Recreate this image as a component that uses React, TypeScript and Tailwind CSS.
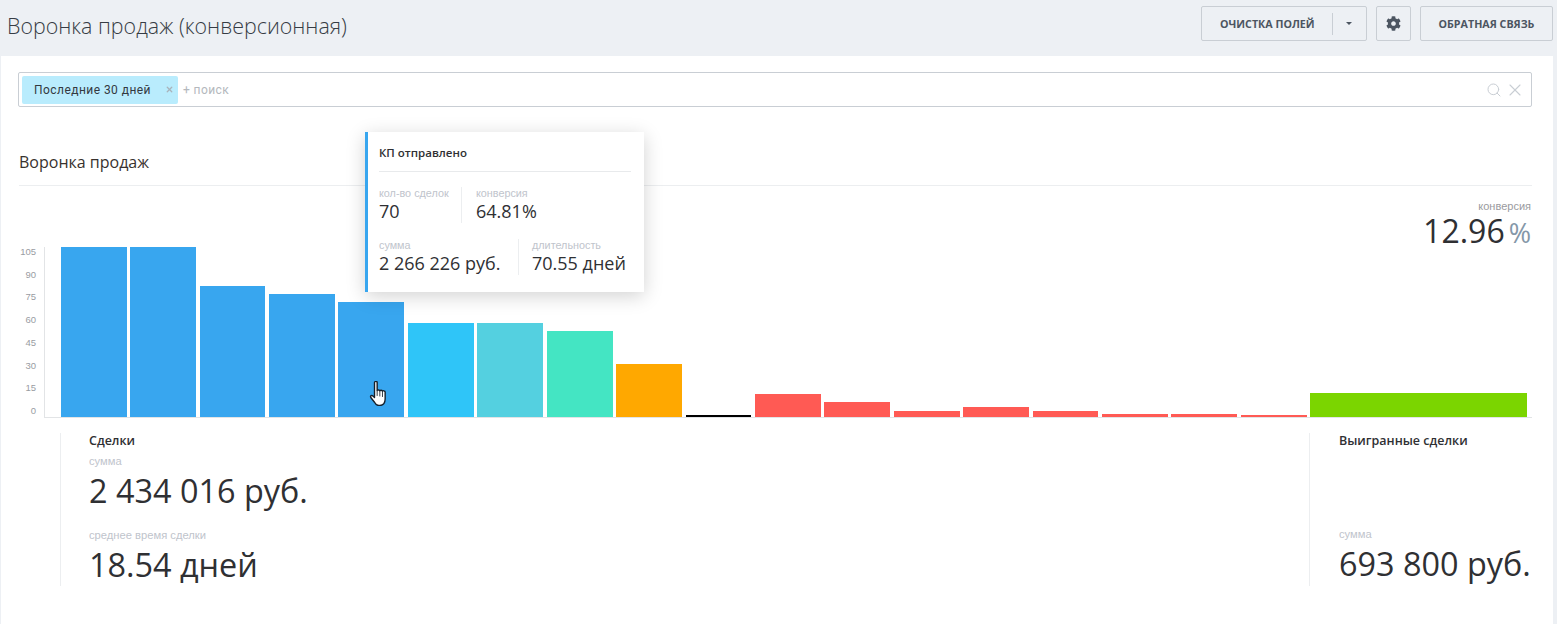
import { Search, X } from 'lucide-react';
import { FaCog } from 'react-icons/fa';

const openSans = { fontFamily: '"Open Sans", sans-serif' };

// g is the gap before the bar, the reference's bars don't sit on an even pitch
const bars = [
  { g: 0, w: 66, h: 170, c: 'bg-[#38a6ef]' },
  { g: 3, w: 66, h: 170, c: 'bg-[#38a6ef]' },
  { g: 4, w: 65, h: 131, c: 'bg-[#38a6ef]' },
  { g: 4, w: 66, h: 123, c: 'bg-[#38a6ef]' },
  { g: 3, w: 66, h: 115, c: 'bg-[#38a6ef]' },
  { g: 4, w: 66, h: 94, c: 'bg-[#2fc5f8]' },
  { g: 3, w: 66, h: 94, c: 'bg-[#54d0e0]' },
  { g: 4, w: 66, h: 86, c: 'bg-[#44e5c3]' },
  { g: 3, w: 66, h: 53, c: 'bg-[#ffa800]' },
  { g: 4, w: 65, h: 2, c: 'bg-black' },
  { g: 4, w: 66, h: 23, c: 'bg-[#ff5a54]' },
  { g: 3, w: 66, h: 15, c: 'bg-[#ff5a54]' },
  { g: 4, w: 66, h: 6, c: 'bg-[#ff5a54]' },
  { g: 3, w: 66, h: 10, c: 'bg-[#ff5a54]' },
  { g: 4, w: 65, h: 6, c: 'bg-[#ff5a54]' },
  { g: 4, w: 66, h: 3, c: 'bg-[#ff5a54]' },
  { g: 3, w: 66, h: 3, c: 'bg-[#ff5a54]' },
  { g: 4, w: 66, h: 2, c: 'bg-[#ff5a54]' },
  { g: 3, w: 217, h: 24, c: 'bg-[#7bd500]' },
];

const ticks = ['105', '90', '75', '60', '45', '30', '15', '0'];

function Label({ children, className = '' }: { children: React.ReactNode; className?: string }) {
  return (
    <div className={`leading-[14px] text-[#c0c4cc] ${className}`} style={{ fontFamily: '"Liberation Sans", sans-serif' }}>
      {children}
    </div>
  );
}

function HeaderButton({ children, className = '' }: { children: React.ReactNode; className?: string }) {
  return (
    <div className={`h-[35px] flex items-center border border-[#c9ced4] rounded-[2px] text-[10.7px] font-bold text-[#4c5561] ${className}`}>
      {children}
    </div>
  );
}

function TooltipCell({ label, value, className = '' }: { label: string; value: string; className?: string }) {
  return (
    <div className={className}>
      <Label className="text-[10.8px] -mt-[1px]">{label}</Label>
      <div className="text-[18px] leading-[22px] text-[#2f3033]">{value}</div>
    </div>
  );
}

export default function App() {
  return (
    <div className="w-[1557px] h-[624px] overflow-hidden bg-[#edf0f4] relative" style={openSans}>
      <header className="h-[56px] flex items-center pl-[7px] pr-[4px]">
        <h1 className="text-[21.4px] font-light text-[#363c44] -mt-[4px]">Воронка продаж (конверсионная)</h1>
        <div className="ml-auto flex items-center gap-[9px] -mt-[9px]">
          <HeaderButton className="w-[166px] pl-[18px]">
            <span className="mt-[1px]">ОЧИСТКА ПОЛЕЙ</span>
            <span className="w-px h-[22px] bg-[#c9ced4] ml-[17px]" />
            <span className="ml-[13px] w-0 h-0 border-x-[3.5px] border-x-transparent border-t-[3.5px] border-t-[#4c5561]" />
          </HeaderButton>
          <HeaderButton className="w-[35px] justify-center">
            <FaCog className="w-[15px] h-[15px] text-[#4c5561]" />
          </HeaderButton>
          <HeaderButton className="w-[133px] justify-center">
            <span className="mt-[1px]">ОБРАТНАЯ СВЯЗЬ</span>
          </HeaderButton>
        </div>
      </header>

      <main className="relative ml-[1px] w-[1552px] h-[568px] bg-white pl-[17px] pr-[21px] pt-[16px]">
        <div className="h-[35px] border border-[#c9ced4] rounded-[2px] flex items-center pl-[3px] pr-[6px]">
          <div className="h-[28px] w-[156px] bg-[#b9ecfd] rounded-[2px] flex items-center pl-[12px] text-[12px] tracking-[0.45px] text-[#33393f]" style={{ fontFamily: 'Roboto, sans-serif' }}>
            Последние 30 дней
            <X className="w-[9px] h-[9px] ml-auto mr-[4px] text-[#a9b3bb]" strokeWidth={3.5} />
          </div>
          <span className="ml-[5px] text-[12px] tracking-[0.4px] text-[#b4b8bd]" style={{ fontFamily: 'Roboto, sans-serif' }}>+ поиск</span>
          <Search className="ml-auto w-[16px] h-[16px] text-[#c9ced4]" strokeWidth={1.5} />
          <X className="ml-[3px] w-[20px] h-[20px] text-[#c9ced4]" strokeWidth={1.3} />
        </div>

        <h2 className="mt-[43px] ml-[1px] h-[36px] border-b border-[#eceef0] text-[16px] leading-[24px] text-[#38322e]">Воронка продаж</h2>

        <div className="text-right pr-[1px] mt-[14px] h-[47px]">
          <div className="text-[11px] leading-[12px] text-[#9a9a9e]" style={{ fontFamily: '"Liberation Sans", sans-serif' }}>конверсия</div>
          <div className="leading-[38px] text-[32px] text-[#2f3033]">
            12.96<span className="text-[27px] text-[#8497a8] ml-[4px]">%</span>
          </div>
        </div>

        <div className="flex h-[171px]">
          <div className="w-[26px] -ml-[8px] -mt-[1px] flex flex-col justify-between items-end text-[9.5px] leading-[12px] text-[#999ca2] h-[171px]" style={{ fontFamily: '"Liberation Sans", sans-serif' }}>
            {ticks.map((t) => (
              <span key={t}>{t}</span>
            ))}
          </div>
          <div className="flex-1 ml-[8px] border-l border-b border-[#e2e4e6] flex items-end pl-[16px]">
            {bars.map((b, i) => (
              <div key={i} className={b.c} style={{ marginLeft: b.g, width: b.w, height: b.h }} />
            ))}
          </div>
        </div>

        <div className="flex mt-[15px] h-[153px] text-[#2f3033]">
          <div className="ml-[42px] border-l border-[#eceef0] pl-[28px] w-[1249px] shrink-0">
            <div className="text-[12.5px] leading-[16px] font-semibold text-[#2f3033]">Сделки</div>
            <Label className="text-[11.2px] mt-[5px]">сумма</Label>
            <div className="text-[32.4px] leading-[46px] -mt-[1px]">2 434 016 руб.</div>
            <Label className="text-[11.2px] mt-[15px]">среднее время сделки</Label>
            <div className="text-[32.4px] leading-[46px] -mt-[1px]">18.54 дней</div>
          </div>
          <div className="border-l border-[#eceef0] pl-[29px]">
            <div className="text-[12.5px] leading-[16px] font-semibold text-[#2f3033] whitespace-nowrap">Выигранные сделки</div>
            <Label className="text-[11.2px] mt-[78px]">сумма</Label>
            <div className="text-[32.4px] leading-[46px] -mt-[1px] whitespace-nowrap">693 800 руб.</div>
          </div>
        </div>

        {/* tooltip over the hovered bar */}
        <div className="absolute left-[364px] top-[76px] w-[279px] h-[160px] bg-white border-l-[3px] border-[#38a6ef] shadow-[0_4px_18px_rgba(0,0,0,0.18)] pl-[11px] pr-[13px]">
          <div className="h-[40px] border-b border-[#e8eaec] text-[11.5px] font-semibold leading-[42px] text-[#2f3033]">КП отправлено</div>
          <div className="flex mt-[15px] h-[36px]">
            <TooltipCell label="кол-во сделок" value="70" className="w-[83px] border-r border-[#eceef0]" />
            <TooltipCell label="конверсия" value="64.81%" className="pl-[14px]" />
          </div>
          <div className="flex mt-[16px] h-[36px]">
            <TooltipCell label="сумма" value="2 266 226 руб." className="w-[140px] border-r border-[#eceef0] whitespace-nowrap" />
            <TooltipCell label="длительность" value="70.55 дней" className="pl-[13px] whitespace-nowrap" />
          </div>
        </div>

        {/* mouse pointer */}
        <svg className="absolute left-[368px] top-[325px] w-[19px] h-[25px]" viewBox="1 1 15.500 23.500">
          <path
            d="M5 2.500c0-1.500 2.500-1.500 2.500 0V10c0-.8 2.500-1 2.500.3 0-.8 2.500-1 2.500.4 0-.7 2.500-.8 2.500.7V18c0 3-1.500 6-5 6H9c-2 0-3-1-4-3l-3.500-4.500c-.8-1.500 1-2.500 2-1.500L5 16.500Z"
            fill="#fff"
            stroke="#16202b"
            strokeWidth="1.300"
            strokeLinejoin="round"
          />
          <path d="M7.500 10v5M10 10.500v5M12.500 11v5" stroke="#16202b" strokeWidth="0.800" fill="none" />
        </svg>
      </main>
    </div>
  );
}
